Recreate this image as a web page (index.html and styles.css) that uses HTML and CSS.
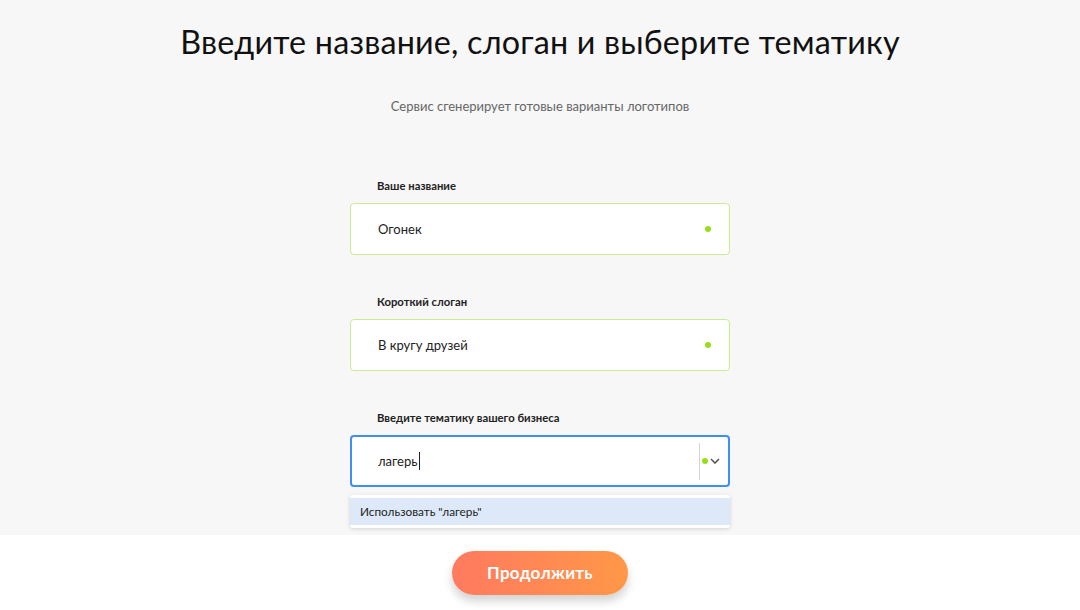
FILE: index.html
```html
<!DOCTYPE html>
<html lang="ru">

<head>
    <meta charset="UTF-8">
    <meta name="viewport" content="width=device-width, initial-scale=1.0">
    <title>Логотип</title>
    <link rel="stylesheet" href="styles.css">
</head>

<body>

    <div class="main">
        <h1>Введите название, слоган и выберите тематику</h1>
        <p class="sub">Сервис сгенерирует готовые варианты логотипов</p>

        <div class="form">
            <div class="field">
                <label for="name">Ваше название</label>
                <div class="box ok">
                    <span class="value">Огонек</span>
                    <span class="dot"></span>
                </div>
            </div>

            <div class="field">
                <label for="slogan">Короткий слоган</label>
                <div class="box ok">
                    <span class="value">В кругу друзей</span>
                    <span class="dot"></span>
                </div>
            </div>

            <div class="field">
                <label for="theme">Введите тематику вашего бизнеса</label>
                <div class="control">
                    <div class="box focus">
                        <span class="value">лагерь<span class="caret"></span></span>
                        <span class="sep"></span>
                        <span class="dot"></span>
                        <svg class="arrow" width="10" height="6" viewBox="0 0 10 6">
                            <path d="M1 1l4 4 4-4" fill="none" stroke="#555" stroke-width="1.6" />
                        </svg>
                    </div>
                    <div class="menu">
                        <div class="option">Использовать "лагерь"</div>
                    </div>
                </div>
            </div>
        </div>
    </div>

    <div class="footer">
        <button class="next">Продолжить</button>
    </div>

</body>

</html>
```

FILE: styles.css
```css
* {
    padding: 0px;
    margin: 0px;
    box-sizing: border-box;
}

body {
    font-family: "Lato", "Open Sans", sans-serif;
    color: #111;
    background-color: #ffffff;
}

.main {
    height: 535px;
    background-color: #f7f7f7;
    display: flex;
    flex-direction: column;
    align-items: center;
}

h1 {
    margin-top: 20px;
    font-size: 32.3px;
    font-weight: 400;
    line-height: 44px;
    letter-spacing: 0.2px;
}

.sub {
    margin-top: 34px;
    font-size: 13px;
    color: #666;
}

.form {
    margin-top: 65px;
    width: 380px;
    display: flex;
    flex-direction: column;
    gap: 40px;
}

.field {
    position: relative;
}

label {
    display: block;
    padding-left: 27px;
    font-size: 11.3px;
    font-weight: 700;
    color: #222;
    margin-bottom: 11px;
}

.control {
    position: relative;
}

.box {
    height: 52px;
    background-color: #fff;
    border-radius: 4px;
    display: flex;
    align-items: center;
    padding: 0 8px 0 27px;
    font-size: 13px;
}

.box.ok {
    border: 1px solid #c8ec8e;
    padding-right: 18px;
}

.box.focus {
    border: 2px solid #3f8ef2;
    padding-left: 26px;
}

.value {
    flex: 1;
    color: #222;
    display: flex;
    align-items: center;
}

.caret {
    display: inline-block;
    width: 1px;
    height: 18px;
    background-color: #222;
    margin-left: 1px;
}

.dot {
    width: 6px;
    height: 6px;
    border-radius: 50%;
    background-color: #96e01a;
}

.sep {
    width: 1px;
    height: 37px;
    background-color: #d4d4d4;
    margin-right: 2px;
}

.arrow {
    margin-left: 2px;
}

.menu {
    position: absolute;
    left: 0;
    right: 0;
    top: calc(100% + 8px);
    background-color: #fff;
    border-radius: 3px;
    box-shadow: 0 1px 4px rgba(0, 0, 0, 0.15);
    padding: 3px 0;
}

.option {
    height: 27px;
    line-height: 27px;
    padding-left: 10px;
    font-size: 11.8px;
    color: #222;
    background-color: #dde9f9;
}

.footer {
    height: 75px;
    display: flex;
    justify-content: center;
    align-items: center;
}

.next {
    width: 176px;
    height: 44px;
    border: none;
    border-radius: 22px;
    background: linear-gradient(90deg, #ff7a5f, #ff9748);
    color: #fff;
    font-family: "Lato", sans-serif;
    font-size: 17px;
    font-weight: 700;
    letter-spacing: 0.3px;
    box-shadow: 0 6px 10px rgba(0, 0, 0, 0.18);
    cursor: pointer;
}
```
